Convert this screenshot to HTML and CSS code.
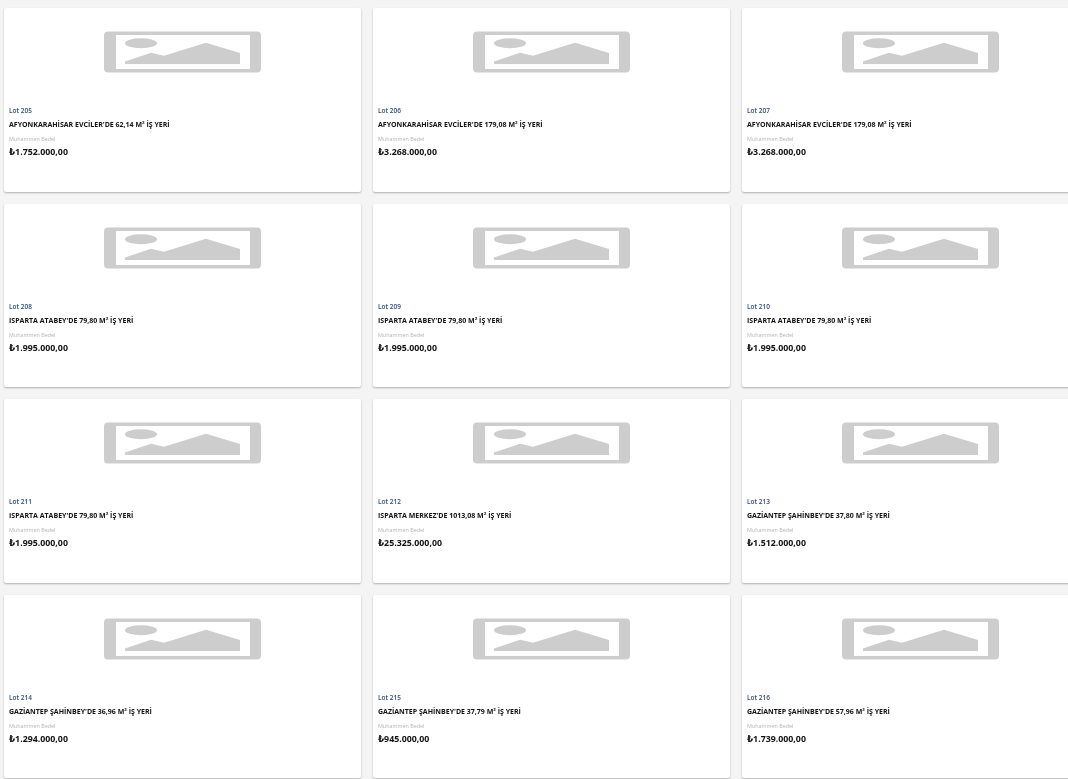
FILE: index.html
```html
<!DOCTYPE html>
<html lang="tr">
<head>
  <meta charset="UTF-8">
  <meta name="viewport" content="width=device-width, initial-scale=1">
  <title>Lotlar</title>
  <link rel="stylesheet" href="styles.css">
</head>
<body>

  <svg class="icon-defs" width="0" height="0" aria-hidden="true">
    <symbol id="no-image" viewBox="0 0 157 42">
      <path fill-rule="evenodd" d="M4 0.500H153A4 4 0 0 1 157 4.500V37.500A4 4 0 0 1 153 41.500H4A4 4 0 0 1 0 37.500V4.500A4 4 0 0 1 4 0.500ZM12 4V38H146V4Z"/>
      <ellipse cx="37" cy="12.300" rx="16" ry="5"/>
      <path d="M21 30.500L47 21.700L60 24.700L102 11.700L136 22V33H21Z"/>
    </symbol>
  </svg>

  <div class="lot-grid">

    <div class="lot-card">
      <div class="lot-image"><svg><use href="#no-image"/></svg></div>
      <div class="lot-no">Lot 205</div>
      <div class="lot-title">AFYONKARAHİSAR EVCİLER'DE 62,14 M² İŞ YERİ</div>
      <div class="lot-label">Muhammen Bedel</div>
      <div class="lot-price">₺1.752.000,00</div>
    </div>

    <div class="lot-card">
      <div class="lot-image"><svg><use href="#no-image"/></svg></div>
      <div class="lot-no">Lot 206</div>
      <div class="lot-title">AFYONKARAHİSAR EVCİLER'DE 179,08 M² İŞ YERİ</div>
      <div class="lot-label">Muhammen Bedel</div>
      <div class="lot-price">₺3.268.000,00</div>
    </div>

    <div class="lot-card">
      <div class="lot-image"><svg><use href="#no-image"/></svg></div>
      <div class="lot-no">Lot 207</div>
      <div class="lot-title">AFYONKARAHİSAR EVCİLER'DE 179,08 M² İŞ YERİ</div>
      <div class="lot-label">Muhammen Bedel</div>
      <div class="lot-price">₺3.268.000,00</div>
    </div>

    <div class="lot-card">
      <div class="lot-image"><svg><use href="#no-image"/></svg></div>
      <div class="lot-no">Lot 208</div>
      <div class="lot-title">ISPARTA ATABEY'DE 79,80 M² İŞ YERİ</div>
      <div class="lot-label">Muhammen Bedel</div>
      <div class="lot-price">₺1.995.000,00</div>
    </div>

    <div class="lot-card">
      <div class="lot-image"><svg><use href="#no-image"/></svg></div>
      <div class="lot-no">Lot 209</div>
      <div class="lot-title">ISPARTA ATABEY'DE 79,80 M² İŞ YERİ</div>
      <div class="lot-label">Muhammen Bedel</div>
      <div class="lot-price">₺1.995.000,00</div>
    </div>

    <div class="lot-card">
      <div class="lot-image"><svg><use href="#no-image"/></svg></div>
      <div class="lot-no">Lot 210</div>
      <div class="lot-title">ISPARTA ATABEY'DE 79,80 M² İŞ YERİ</div>
      <div class="lot-label">Muhammen Bedel</div>
      <div class="lot-price">₺1.995.000,00</div>
    </div>

    <div class="lot-card">
      <div class="lot-image"><svg><use href="#no-image"/></svg></div>
      <div class="lot-no">Lot 211</div>
      <div class="lot-title">ISPARTA ATABEY'DE 79,80 M² İŞ YERİ</div>
      <div class="lot-label">Muhammen Bedel</div>
      <div class="lot-price">₺1.995.000,00</div>
    </div>

    <div class="lot-card">
      <div class="lot-image"><svg><use href="#no-image"/></svg></div>
      <div class="lot-no">Lot 212</div>
      <div class="lot-title">ISPARTA MERKEZ'DE 1013,08 M² İŞ YERİ</div>
      <div class="lot-label">Muhammen Bedel</div>
      <div class="lot-price">₺25.325.000,00</div>
    </div>

    <div class="lot-card">
      <div class="lot-image"><svg><use href="#no-image"/></svg></div>
      <div class="lot-no">Lot 213</div>
      <div class="lot-title">GAZİANTEP ŞAHİNBEY'DE 37,80 M² İŞ YERİ</div>
      <div class="lot-label">Muhammen Bedel</div>
      <div class="lot-price">₺1.512.000,00</div>
    </div>

    <div class="lot-card">
      <div class="lot-image"><svg><use href="#no-image"/></svg></div>
      <div class="lot-no">Lot 214</div>
      <div class="lot-title">GAZİANTEP ŞAHİNBEY'DE 36,96 M² İŞ YERİ</div>
      <div class="lot-label">Muhammen Bedel</div>
      <div class="lot-price">₺1.294.000,00</div>
    </div>

    <div class="lot-card">
      <div class="lot-image"><svg><use href="#no-image"/></svg></div>
      <div class="lot-no">Lot 215</div>
      <div class="lot-title">GAZİANTEP ŞAHİNBEY'DE 37,79 M² İŞ YERİ</div>
      <div class="lot-label">Muhammen Bedel</div>
      <div class="lot-price">₺945.000,00</div>
    </div>

    <div class="lot-card">
      <div class="lot-image"><svg><use href="#no-image"/></svg></div>
      <div class="lot-no">Lot 216</div>
      <div class="lot-title">GAZİANTEP ŞAHİNBEY'DE 57,96 M² İŞ YERİ</div>
      <div class="lot-label">Muhammen Bedel</div>
      <div class="lot-price">₺1.739.000,00</div>
    </div>

  </div>

</body>
</html>
```

FILE: styles.css
```css
html, body {
  height: 100%;
  overflow: hidden;
}

body {
  margin: 0;
  padding: 8px 0 0 4px;
  box-sizing: border-box;
  font-family: "Open Sans", "DejaVu Sans", sans-serif;
  background-color: #f4f4f4;
}

.icon-defs {
  display: block;
}

.lot-grid {
  display: grid;
  grid-template-columns: repeat(3, 357px);
  grid-auto-rows: 183.500px;
  gap: 12px;
  width: 1100px;
}

.lot-card {
  background-color: #fff;
  border-radius: 2px;
  box-shadow: 0 1px 2px rgba(0, 0, 0, 0.28);
  padding: 0 5px;
}

.lot-image {
  height: 96px;
  display: flex;
  justify-content: center;
  align-items: flex-start;
  padding-top: 23px;
  box-sizing: border-box;
}

.lot-image svg {
  width: 157px;
  height: 42px;
  fill: #cdcdcd;
  filter: blur(0.5px);
}

.lot-no,
.lot-title,
.lot-label,
.lot-price {
  filter: blur(0.25px);
}

.lot-no {
  font-size: 6.500px;
  line-height: 9px;
  font-weight: 600;
  color: #2f4a80;
  margin-top: 2px;
}

.lot-title {
  font-size: 7px;
  line-height: 9px;
  font-weight: 700;
  color: #111;
  margin-top: 5px;
}

.lot-label {
  font-size: 5.400px;
  line-height: 7px;
  color: #b4b4b4;
  margin-top: 7px;
}

.lot-price {
  font-size: 8.800px;
  line-height: 12px;
  font-weight: 700;
  color: #111;
  margin-top: 3px;
}
```
